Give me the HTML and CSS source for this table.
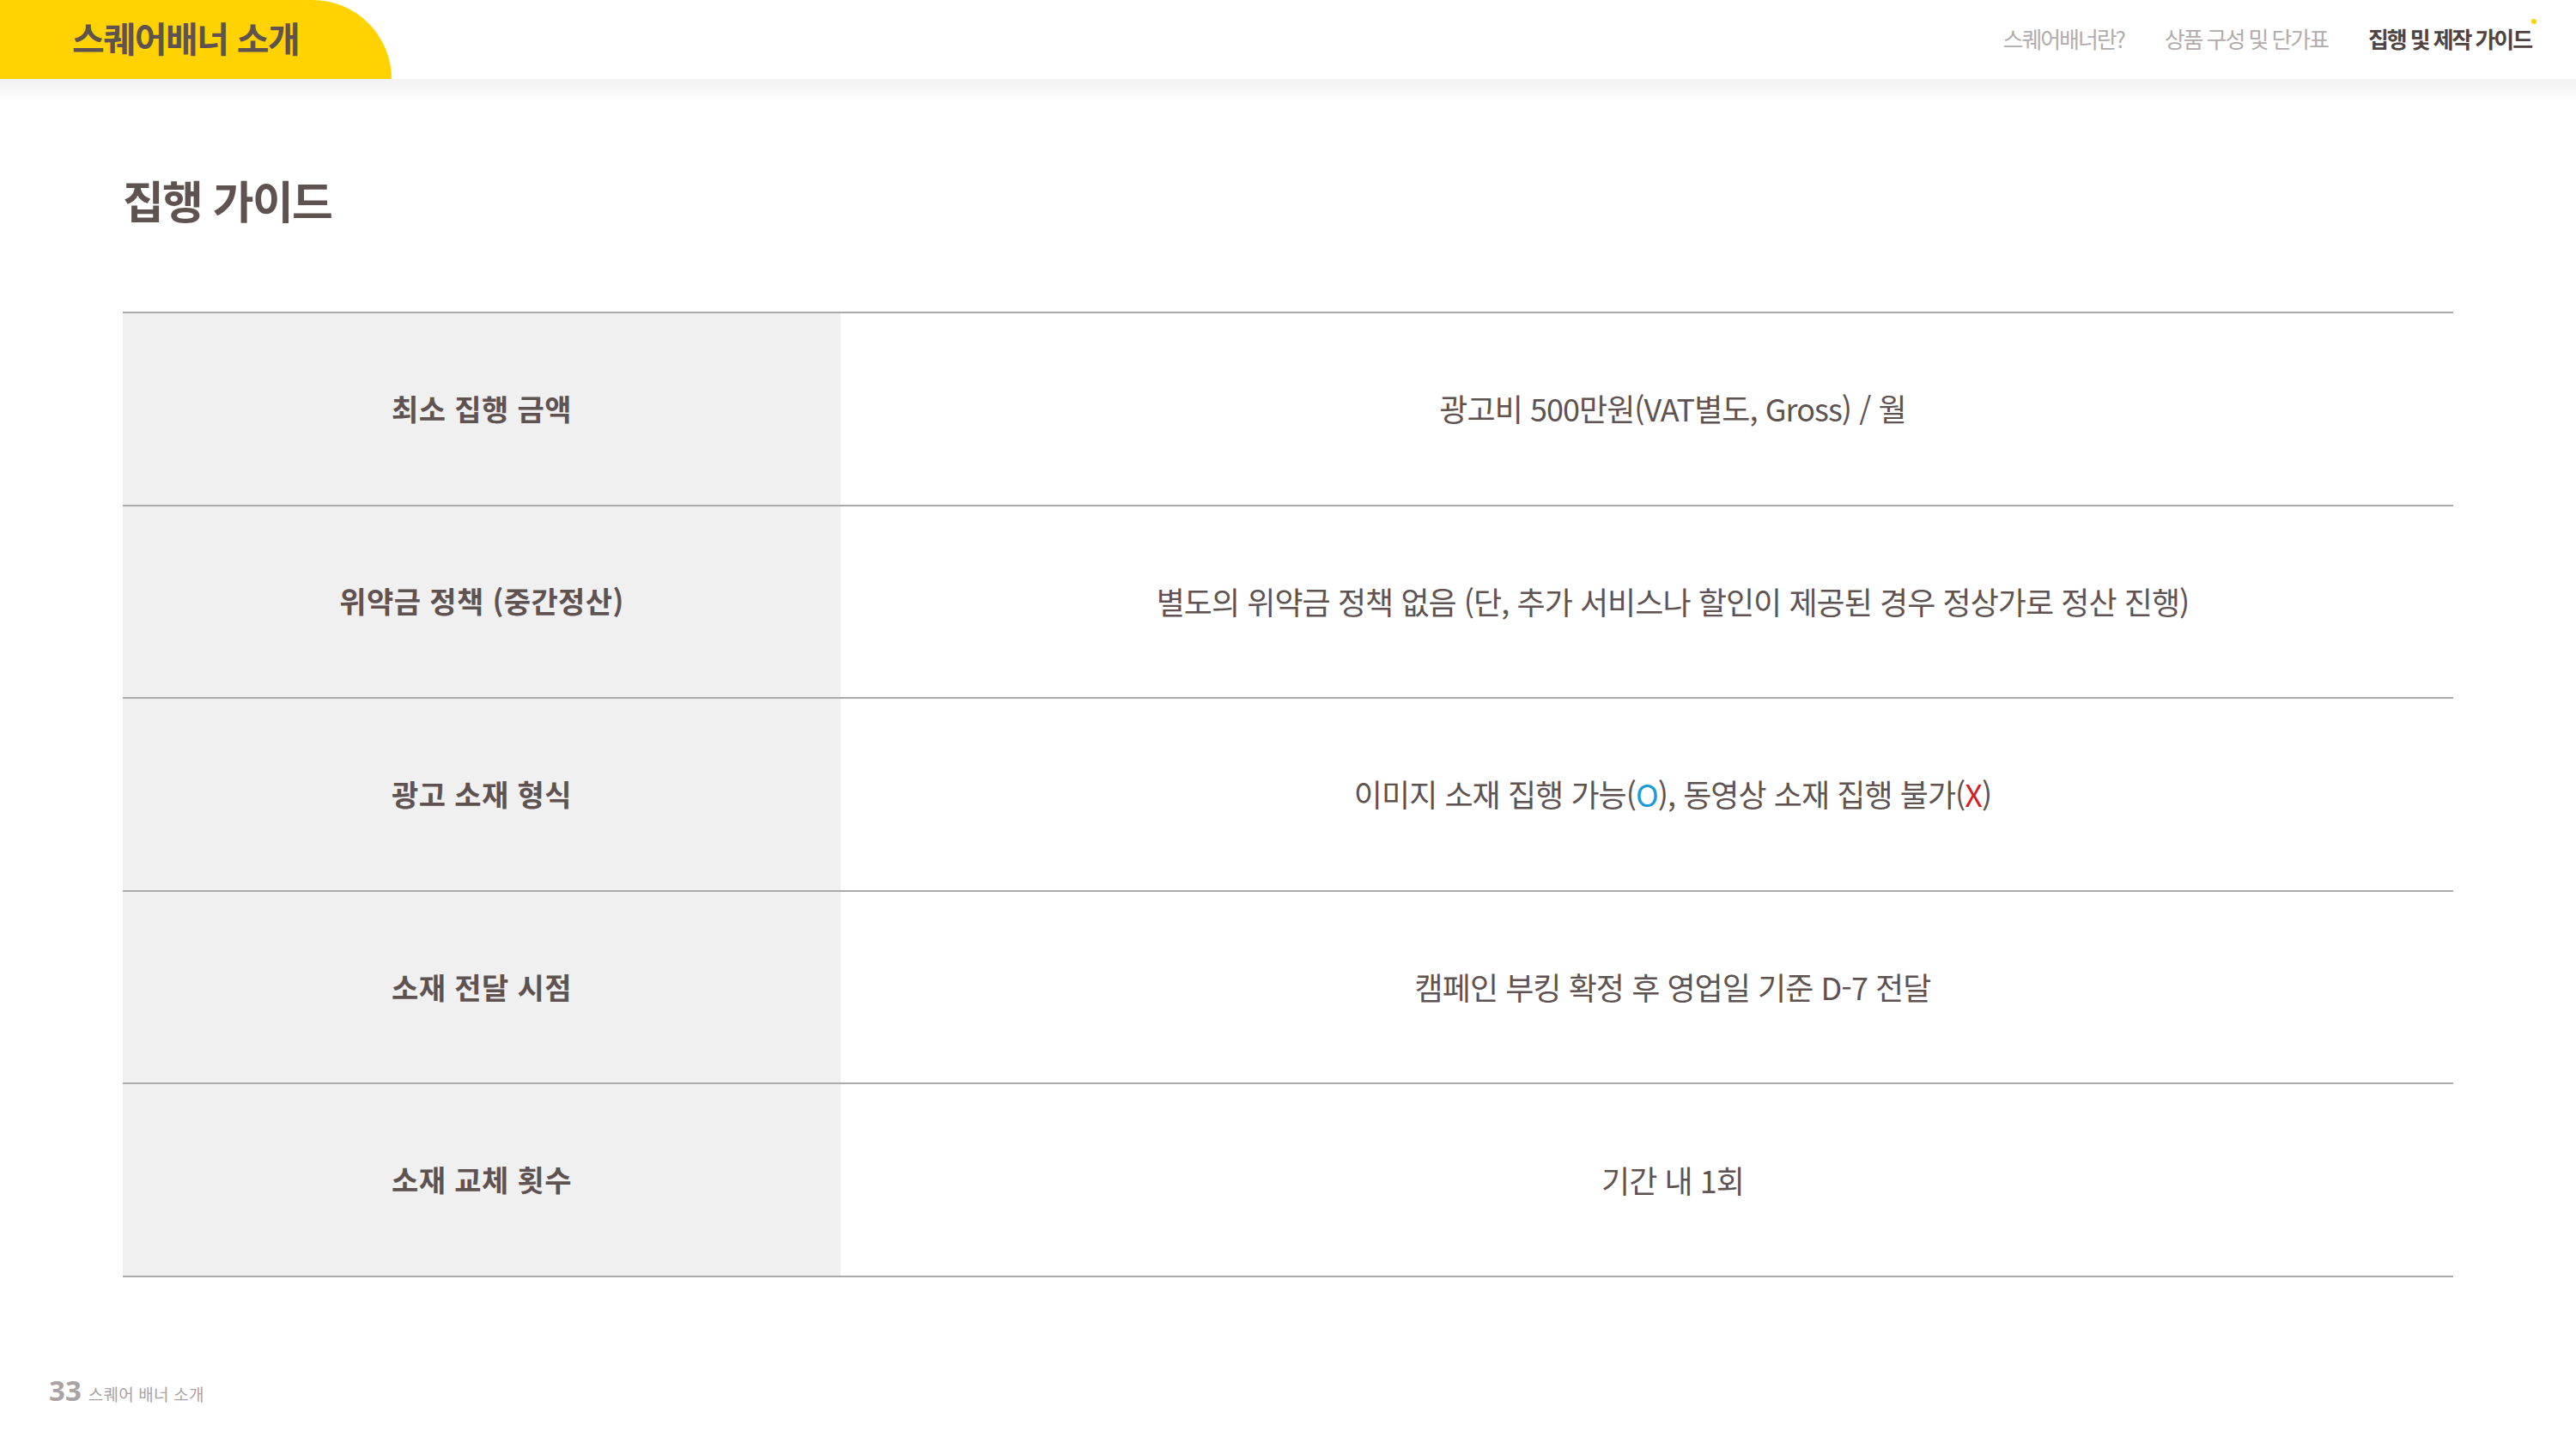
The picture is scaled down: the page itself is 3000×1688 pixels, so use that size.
FILE: index.html
```html
<!DOCTYPE html>
<html lang="ko">
<head>
<meta charset="utf-8">
<title>집행 가이드</title>
<link rel="stylesheet" href="styles.css">
</head>
<body>
<div class="page">
  <header class="topbar">
    <div class="tab"><span class="tab-title">스퀘어배너 소개</span></div>
    <nav class="nav">
      <span class="nav-item">스퀘어배너란?</span>
      <span class="nav-item">상품 구성 및 단가표</span>
      <span class="nav-item active">집행 및 제작 가이드</span>
    </nav>
  </header>
  <div class="shade"></div>
  <main class="main">
    <h1 class="title">집행 가이드</h1>
    <div class="table">
      <div class="row">
        <div class="label">최소 집행 금액</div>
        <div class="value">광고비 500만원(VAT별도, Gross) / 월</div>
      </div>
      <div class="row">
        <div class="label">위약금 정책 (중간정산)</div>
        <div class="value">별도의 위약금 정책 없음 (단, 추가 서비스나 할인이 제공된 경우 정상가로 정산 진행)</div>
      </div>
      <div class="row">
        <div class="label">광고 소재 형식</div>
        <div class="value">이미지 소재 집행 가능(<span class="ok">O</span>), 동영상 소재 집행 불가(<span class="no">X</span>)</div>
      </div>
      <div class="row">
        <div class="label">소재 전달 시점</div>
        <div class="value">캠페인 부킹 확정 후 영업일 기준 D-7 전달</div>
      </div>
      <div class="row">
        <div class="label">소재 교체 횟수</div>
        <div class="value">기간 내 1회</div>
      </div>
    </div>
  </main>
  <footer class="footer">
    <span class="page-no">33</span>
    <span class="page-name">스퀘어 배너 소개</span>
  </footer>
</div>
</body>
</html>
```

FILE: styles.css
```css
* { box-sizing: border-box; }

html, body {
  margin: 0;
  padding: 0;
  background: #ffffff;
}

body {
  font-family: "Noto Sans CJK KR", "Noto Sans", sans-serif;
  color: #5f5352;
}

.page {
  width: 3000px;
  height: 1688px;
  overflow: hidden;
}

.topbar {
  height: 92px;
  display: flex;
  justify-content: space-between;
  align-items: stretch;
}

.tab {
  width: 456px;
  background: #ffd200;
  border-top-right-radius: 92px 92px;
  display: flex;
  align-items: center;
  padding-left: 84px;
}

.tab-title {
  font-size: 41px;
  font-weight: 700;
  letter-spacing: -1.4px;
  line-height: 1;
  margin-top: -5px;
}

.nav {
  display: flex;
  align-items: center;
  gap: 47px;
  padding-right: 52px;
  margin-top: -2px;
}

.nav-item {
  font-size: 26px;
  letter-spacing: -2.1px;
  color: #b3acac;
  line-height: 1;
}

.nav-item.active {
  color: #4f4442;
  font-weight: 700;
  position: relative;
}

.nav-item.active::after {
  content: "";
  position: absolute;
  right: -6px;
  top: -10px;
  width: 6px;
  height: 6px;
  border-radius: 50%;
  background: #ffd200;
}

.shade {
  height: 26px;
  background: linear-gradient(#f1f1f1, #ffffff);
}

.main {
  padding: 89px 143px 0 143px;
}

.title {
  margin: 0;
  font-size: 52px;
  font-weight: 700;
  letter-spacing: -1.8px;
  line-height: 1;
}

.table {
  margin-top: 104px;
  width: 2714px;
  border-bottom: 2px solid #aaaaaa;
  display: grid;
  grid-auto-rows: 224.6px;
}

.row {
  display: grid;
  grid-template-columns: 836px 1fr;
  border-top: 2px solid #aaaaaa;
}

.label {
  background: #f0f0f0;
  display: flex;
  align-items: center;
  justify-content: center;
  font-size: 34px;
  font-weight: 700;
  letter-spacing: 0.4px;
  padding-bottom: 2px;
}

.value {
  display: flex;
  align-items: center;
  justify-content: center;
  padding-left: 60px;
  padding-bottom: 2px;
  font-size: 36px;
  letter-spacing: -0.95px;
}

.ok { color: #1a9bd7; }
.no { color: #d01f26; }

.footer {
  margin-top: 115px;
  padding-left: 57px;
  display: flex;
  align-items: baseline;
  gap: 8px;
  color: #aaa3a3;
}

.page-no {
  font-family: "Noto Sans", sans-serif;
  font-size: 33px;
  font-weight: 700;
  line-height: 1;
}

.page-name {
  font-size: 19px;
  letter-spacing: 0.2px;
  line-height: 1;
}
```
